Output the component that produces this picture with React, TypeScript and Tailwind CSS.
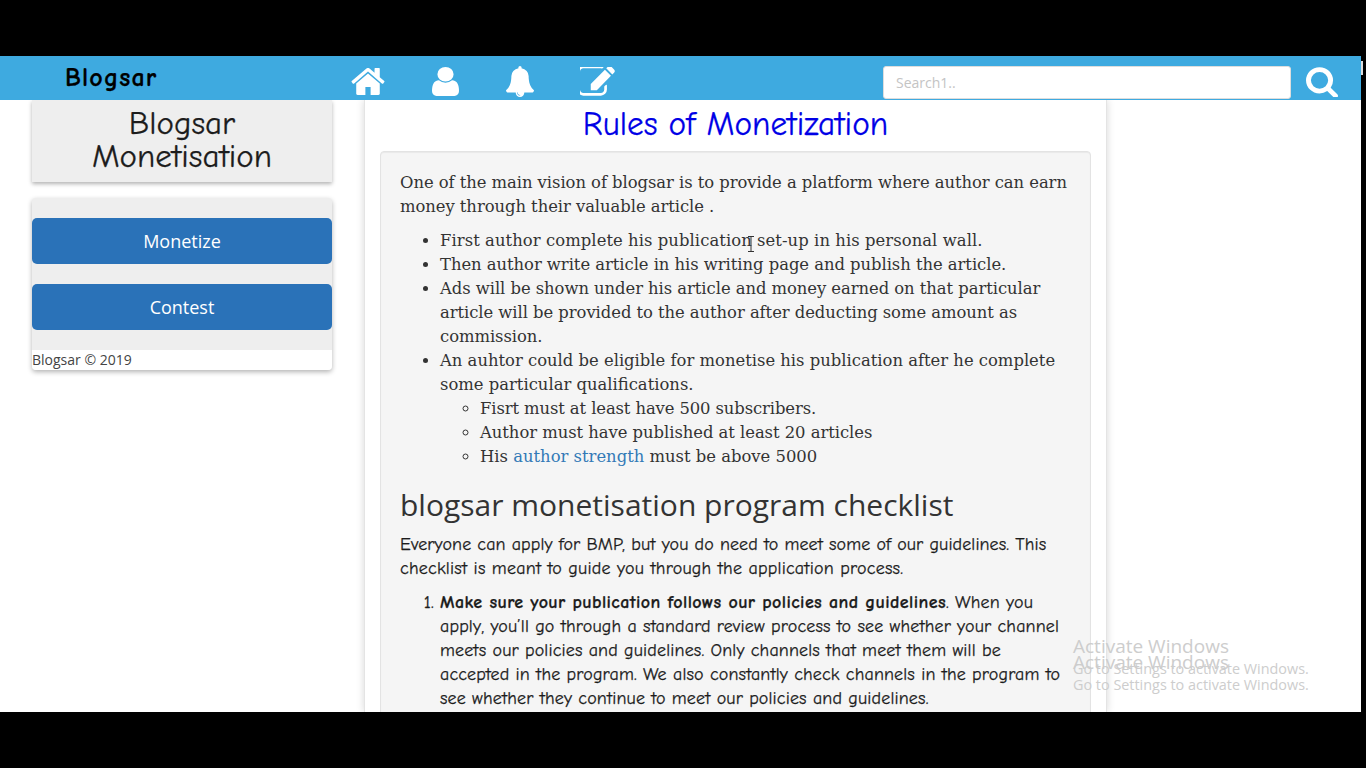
const serif = "font-['DejaVu_Serif',serif] text-[16.4px] text-[#333]";
const comic = "font-['Comic_Sans_MS','Comic_Neue',cursive] text-[#1c1c1c] [-webkit-text-stroke:0.25px_currentColor]";
const HOME = "M1472 992v480q0 26-19 45t-45 19h-384v-384h-256v384h-384q-26 0-45-19t-19-45v-480q0-1 .5-3t.5-3l575-474 575 474q1 2 1 6zm223-69l-62 74q-8 9-21 11h-3q-13 0-21-7l-692-577-692 577q-12 8-24 7-13-2-21-11l-62-74q-8-10-7-23.5t11-21.5l719-599q32-26 76-26t76 26l244 204v-195q0-14 9-23t23-9h192q14 0 23 9t9 23v408l219 182q10 8 11 21.5t-7 23.5z";
const USER = "M1536 1399q0 109-62.5 187t-150.5 78h-854q-88 0-150.5-78t-62.5-187q0-85 8.5-160.5t31.5-152 58.5-131 94-89 134.5-34.5q131 128 313 128t313-128q76 0 134.5 34.5t94 89 58.5 131 31.5 152 8.5 160.5zm-256-887q0 159-112.5 271.5t-271.5 112.5-271.5-112.5-112.5-271.5 112.5-271.5 271.5-112.5 271.5 112.5 112.5 271.5z";
const BELL = "M912 1696q0-16-16-16-59 0-101.5-42.5t-42.5-101.5q0-16-16-16t-16 16q0 73 51.5 124.5t124.5 51.5q16 0 16-16zm816-288q0 52-38 90t-90 38h-448q0 106-75 181t-181 75-181-75-75-181h-448q-52 0-90-38t-38-90q50-42 91-88t85-119.5 74.5-158.5 50-206 19.5-260q0-152 117-282.5t307-158.5q-8-19-8-39 0-40 28-68t68-28 68 28 28 68q0 20-8 39 190 28 307 158.5t117 282.5q0 139 19.5 260t50 206 74.5 158.5 85 119.5 91 88z";
const EDIT = "M1408 1058v190q0 119-84.5 203.5t-203.5 84.5h-832q-119 0-203.5-84.5t-84.5-203.5v-832q0-119 84.5-203.5t203.5-84.5h832q63 0 117 25 15 7 18 23 3 17-9 29l-49 49q-14 14-32 8-23-6-45-6h-832q-66 0-113 47t-47 113v832q0 66 47 113t113 47h832q66 0 113-47t47-113v-126q0-13 9-22l64-64q15-15 35-7t20 29zm-96-738l288 288-672 672h-288v-288zm444 132l-92 92-288-288 92-92q28-28 68-28t68 28l152 152q28 28 28 68t-28 68z";
const SEARCH = "M1216 832q0-185-131.5-316.5t-316.5-131.5-316.5 131.5-131.5 316.5 131.5 316.5 316.5 131.5 316.5-131.5 131.5-316.5zm512 832q0 52-38 90t-90 38q-54 0-90-38l-343-342q-179 124-399 124-143 0-273.5-55.5t-225-150-150-225-55.5-273.5 55.5-273.5 150-225 225-150 273.5-55.5 273.5 55.5 225 150 150 225 55.5 273.5q0 220-124 399l343 343q37 37 37 90z";

function Glyph({ d, box, className }: { d: string; box: string; className: string }) {
  return (
    <svg viewBox={box} preserveAspectRatio="none" className={className} fill="currentColor">
      <path d={d} />
    </svg>
  );
}

export default function App() {
  return (
    <div className="relative flex h-screen w-full flex-col overflow-hidden bg-black">
      <div className="h-14 shrink-0 bg-black" />
      <div className="relative mr-[5px] flex min-h-0 flex-1 flex-col overflow-hidden bg-white">
        <header className="relative z-10 flex h-11 shrink-0 items-center bg-[#3eaae0] pt-[7px]">
          <div className={`-mt-[7px] w-[351px] pl-[65px] text-[26px] font-bold tracking-[1.15px] !text-black ${comic}`}>Blogsar</div>
          <nav className="flex w-[532px] items-center text-white">
            <Glyph d={HOME} box="64 256 1664 1280" className="h-[27px] w-[34px]" />
            <Glyph d={USER} box="256 128 1280 1536" className="ml-[47px] h-[29px] w-[27px]" />
            <Glyph d={BELL} box="64 0 1664 1792" className="ml-[47px] h-[31px] w-[28px]" />
            <Glyph d={EDIT} box="128 192 1664 1408" className="ml-[46px] h-[30px] w-[35px]" />
          </nav>
          <input
            readOnly
            placeholder="Search1.."
            className="mt-[1px] h-[33px] w-[408px] rounded-[3px] border border-[#ddd] bg-white px-3 font-['Open_Sans',sans-serif] text-[14px] placeholder:text-[#c4c4c4]"
          />
          <Glyph d={SEARCH} box="64 64 1664 1664" className="ml-[15px] h-[31px] w-[32px] text-white" />
        </header>
        <div className="flex min-h-0 flex-1">
          <aside className="ml-8 mr-[32px] w-[300px] shrink-0">
            <div className={`bg-[#eee] pb-[9px] pt-[7px] text-center text-[33px] leading-[33px] shadow-[0_2px_4px_rgba(0,0,0,0.3)] ${comic}`}>
              Blogsar<br />Monetisation
            </div>
            <div className="mt-[16px] overflow-hidden rounded-[4px] bg-[#eee] shadow-[0_2px_5px_rgba(0,0,0,0.3)]">
              <div className="flex flex-col gap-5 py-5">
                <div className="flex h-[46px] items-center justify-center rounded-[5px] bg-[#2a72b8] font-['Open_Sans',sans-serif] text-[18px] text-white">Monetize</div>
                <div className="flex h-[46px] items-center justify-center rounded-[5px] bg-[#2a72b8] font-['Open_Sans',sans-serif] text-[18px] text-white">Contest</div>
              </div>
              <div className="bg-white font-['Open_Sans',sans-serif] text-[14px] leading-5 text-[#444]">Blogsar © 2019</div>
            </div>
          </aside>
          <main className="w-[743px] shrink-0 border-x border-[#e4e4e4] px-[15px] shadow-[0_0_8px_rgba(0,0,0,0.16)]">
            <h1 className={`h-[51px] pt-[5px] text-center text-[33.3px] leading-[38px] !text-[#0000e6] ${comic}`}>Rules of Monetization</h1>
            <div className="h-[600px] rounded-[4px] border border-[#e3e3e3] bg-[#f5f5f5] px-[19px] pt-[19px] leading-6 shadow-[inset_0_1px_1px_rgba(0,0,0,0.05)]">
              <p className={`whitespace-nowrap leading-6 tracking-[-0.05px] ${serif}`}>
                One of the main vision of blogsar is to provide a platform where author can earn<br />
                money through their valuable article .
              </p>
              <ul className={`mt-[10px] list-disc whitespace-nowrap pl-10 leading-6 ${serif}`}>
                <li className="tracking-[0.07px]">First author complete his publication set-up in his personal wall.</li>
                <li className="tracking-[-0.04px]">Then author write article in his writing page and publish the article.</li>
                <li className="tracking-[-0.05px]">Ads will be shown under his article and money earned on that particular<br />article will be provided to the author after deducting some amount as<br />commission.</li>
                <li>An auhtor could be eligible for monetise his publication after he complete<br />some particular qualifications.
                  <ul className="list-[circle] pl-10">
                    <li className="tracking-[-0.1px]">Fisrt must at least have 500 subscribers.</li>
                    <li className="tracking-[-0.04px]">Author must have published at least 20 articles</li>
                    <li>His <span className="text-[#337ab7]">author strength</span> must be above 5000</li>
                  </ul>
                </li>
              </ul>
              <h2 className="mt-[19px] font-['Open_Sans',sans-serif] text-[30px] leading-[33px] text-[#333]">blogsar monetisation program checklist</h2>
              <p className={`mt-[12px] whitespace-nowrap text-[18px] leading-6 tracking-[0.1px] ${comic}`}>
                Everyone can apply for BMP, but you do need to meet some of our guidelines. This<br />
                <span className="tracking-[0.22px]">checklist is meant to guide you through the application process.</span>
              </p>
              <ol className={`mt-[10px] list-decimal whitespace-nowrap pl-10 text-[18px] leading-6 tracking-[0.15px] ${comic}`}>
                <li><b className="tracking-[0.4px]">Make sure your publication follows our policies and guidelines</b>. When you<br />
                  apply, you’ll go through a standard review process to see whether your channel<br />
                  meets our policies and guidelines. Only channels that meet them will be<br />
                  accepted in the program. We also constantly check channels in the program to<br />
                  see whether they continue to meet our policies and guidelines.</li>
              </ol>
            </div>
          </main>
        </div>
      </div>
      <div className="h-14 shrink-0 bg-black" />
      <div className="pointer-events-none absolute left-[1361px] top-[61px] h-[14px] w-[2px] bg-[#ddd]" />
      <svg className="pointer-events-none absolute left-[747px] top-[236px] text-[#333]" width="8" height="16" viewBox="0 0 8 16" fill="none" stroke="currentColor" strokeWidth="1">
        <path d="M1 .5h6M4 .5v15M1 15.5h6" />
      </svg>
      <div className="pointer-events-none absolute left-[1073px] top-[636px] font-['Open_Sans',sans-serif] text-[#cdcdcd]">
        <div className="text-[19px] leading-[20px]">Activate Windows</div>
        <div className="-mt-[4px] text-[19px] leading-[20px]">Activate Windows</div>
        <div className="-mt-[11px] text-[14.4px] leading-[16px]">Go to Settings to activate Windows.</div>
        <div className="text-[14.4px] leading-[16px]">Go to Settings to activate Windows.</div>
      </div>
    </div>
  );
}
